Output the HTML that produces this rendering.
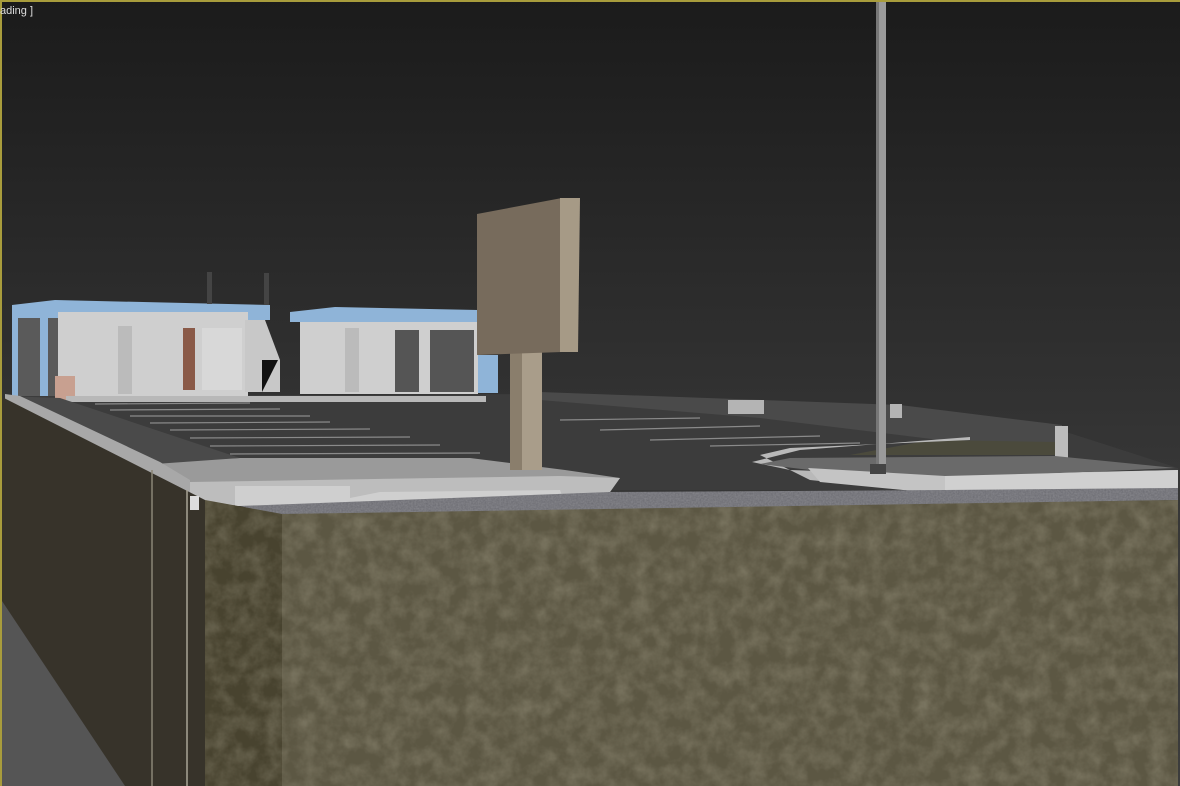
<!DOCTYPE html>
<html><head><style>
html,body{margin:0;padding:0;background:#222;}
svg{display:block}
</style></head><body>
<svg width="1180" height="786" viewBox="0 0 1180 786" xmlns="http://www.w3.org/2000/svg">
<defs>
<linearGradient id="sky" x1="0" y1="0" x2="0" y2="1">
<stop offset="0" stop-color="#1b1b1b"/><stop offset="0.6" stop-color="#363636"/><stop offset="1" stop-color="#3c3c3c"/>
</linearGradient>
<filter id="noise" x="0" y="0" width="100%" height="100%">
<feTurbulence type="fractalNoise" baseFrequency="0.06" numOctaves="4" seed="4"/>
<feColorMatrix values="0 0 0 0 0.62  0 0 0 0 0.58  0 0 0 0 0.45  0 0 0 1.4 -0.45"/>
<feComposite in2="SourceGraphic" operator="in"/>
</filter>
<filter id="grav" x="0" y="0" width="100%" height="100%">
<feTurbulence type="fractalNoise" baseFrequency="0.6" numOctaves="2" seed="2"/>
<feColorMatrix values="0 0 0 0 0.7  0 0 0 0 0.7  0 0 0 0 0.72  0 0 0 0.8 -0.1"/>
<feComposite in2="SourceGraphic" operator="in"/>
</filter>
</defs>
<rect width="1180" height="786" fill="url(#sky)"/>
<polygon points="8,396 540,394 1060,430 1178,468 1178,490 620,490 300,492 190,488 150,462 60,420" fill="#3c3c3c"/>
<polygon points="540,392 900,405 1062,425 1062,455 940,440 760,418 540,400" fill="#4a4a4a"/>
<rect x="728" y="400" width="36" height="14" fill="#b4b4b4"/>
<rect x="890" y="404" width="12" height="14" fill="#b4b4b4"/>
<rect x="1055" y="426" width="13" height="34" fill="#bcbcbc"/>
<polygon points="930,440 1055,442 1055,455 850,455" fill="#4b4a3c"/>
<g stroke="#8a8a8a" stroke-width="1.2">
<line x1="95" y1="404" x2="250" y2="403"/><line x1="110" y1="410" x2="280" y2="409"/>
<line x1="130" y1="416" x2="310" y2="416"/><line x1="150" y1="423" x2="330" y2="422"/>
<line x1="170" y1="430" x2="370" y2="429"/><line x1="190" y1="438" x2="410" y2="437"/>
<line x1="210" y1="446" x2="440" y2="445"/><line x1="230" y1="454" x2="480" y2="453"/>
<line x1="560" y1="420" x2="700" y2="418"/><line x1="600" y1="430" x2="760" y2="426"/>
<line x1="650" y1="440" x2="820" y2="436"/><line x1="710" y1="446" x2="860" y2="443"/>
</g>
<polygon points="760,455 790,448 970,440 970,437 800,450 752,462 790,470 940,475 1178,470 1178,492 945,494 810,480" fill="#b9b9b9"/>
<polygon points="790,458 1055,456 1175,468 945,478 810,470 760,464" fill="#6a6a6a"/>
<polygon points="808,468 945,476 945,494 820,482" fill="#c4c4c4"/>
<polygon points="945,476 1178,470 1178,492 945,494" fill="#d0d0d0"/>
<polygon points="12,305 55,300 270,305 270,320 12,320" fill="#8fb4d8"/>
<rect x="12" y="318" width="48" height="78" fill="#5a5a5a"/>
<rect x="12" y="318" width="6" height="78" fill="#8fb4d8"/>
<rect x="40" y="318" width="8" height="78" fill="#8fb4d8"/>
<rect x="58" y="312" width="190" height="84" fill="#cfcfcf"/>
<rect x="118" y="326" width="14" height="68" fill="#bbb"/>
<rect x="183" y="328" width="12" height="62" fill="#8a5a48"/>
<rect x="202" y="328" width="40" height="62" fill="#d8d8d8"/>
<polygon points="245,320 265,320 280,360 280,392 245,392" fill="#c8c8c8"/>
<polygon points="262,360 278,360 262,392" fill="#111"/>
<rect x="207" y="272" width="5" height="32" fill="#444"/><rect x="264" y="273" width="5" height="32" fill="#444"/>
<polygon points="290,312 335,307 478,310 478,322 290,322" fill="#8fb4d8"/>
<rect x="300" y="322" width="178" height="72" fill="#cfcfcf"/>
<rect x="345" y="328" width="14" height="64" fill="#bbb"/>
<rect x="395" y="330" width="24" height="62" fill="#555"/>
<rect x="430" y="330" width="44" height="62" fill="#555"/>
<rect x="478" y="355" width="20" height="38" fill="#8fb4d8"/>
<rect x="55" y="376" width="20" height="26" fill="#c8a090"/>
<rect x="66" y="396" width="420" height="6" fill="#b8b8b8"/>
<polygon points="150,462 240,458 470,458 565,470 620,478 610,492 300,498 190,496 170,478" fill="#9a9a9a"/>
<polygon points="190,482 560,476 620,478 610,492 565,500 190,506" fill="#bdbdbd"/>
<polygon points="235,486 350,486 350,498 380,492 560,490 565,504 350,506 300,506 235,506" fill="#cfcfcf"/>
<polygon points="5,396 60,398 240,458 155,464" fill="#4a4a4a"/>
<polygon points="5,394 20,396 160,462 190,480 190,500 150,478 5,408" fill="#a8a8a8"/>
<polygon points="240,506 610,492 945,490 1178,488 1178,500 282,516" fill="#6e6e74"/>
<polygon points="240,506 610,492 945,490 1178,488 1178,500 282,516" fill="#fff" filter="url(#grav)" opacity="0.35"/>
<polygon points="0,396 205,500 205,786 0,786" fill="#37332a"/>
<polygon points="205,500 282,514 282,786 205,786" fill="#48432f"/>
<polygon points="282,514 1178,500 1178,786 282,786" fill="#5c5743"/>
<polygon points="205,500 282,514 1178,500 1178,786 205,786" fill="#fff" filter="url(#noise)" opacity="0.3"/>
<line x1="152" y1="470" x2="152" y2="786" stroke="#8a8676" stroke-width="1.5"/>
<line x1="187" y1="490" x2="187" y2="786" stroke="#a8a496" stroke-width="1.5"/>
<rect x="190" y="496" width="9" height="14" fill="#ddd"/>
<polygon points="0,598 125,786 0,786" fill="#555"/>
<rect x="510" y="352" width="32" height="118" fill="#8a7e6c"/>
<rect x="522" y="352" width="20" height="118" fill="#a99d8a"/>
<polygon points="477,214 562,198 562,352 477,355" fill="#776b5c"/>
<polygon points="560,198 580,198 578,352 560,352" fill="#a69a86"/>
<rect x="876" y="0" width="10" height="470" fill="#9a9a9a"/>
<rect x="876" y="0" width="3" height="470" fill="#777"/>
<rect x="870" y="464" width="16" height="10" fill="#444"/>
<rect x="0" y="0" width="1180" height="2" fill="#a89c3c"/>
<rect x="0" y="0" width="2" height="786" fill="#a89c3c"/>
<text x="0" y="14" fill="#ddd" font-family="Liberation Sans, sans-serif" font-size="11">ading ]</text>
</svg>
</body></html>
